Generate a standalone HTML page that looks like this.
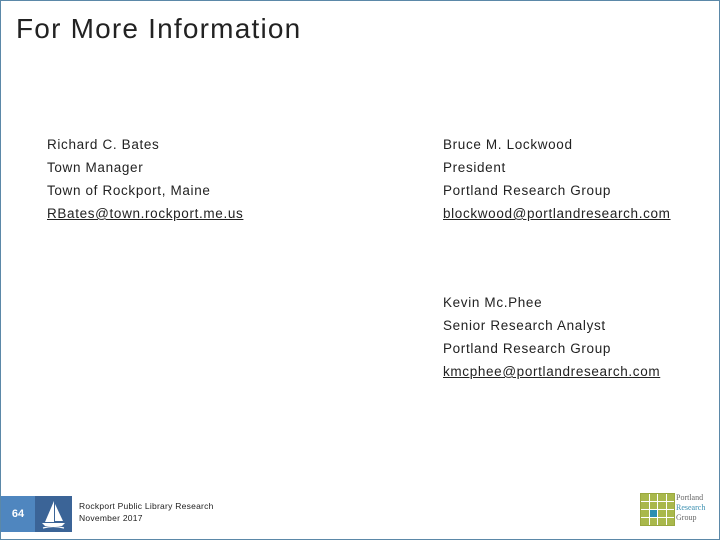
<!DOCTYPE html>
<html><head><style>
body{margin:0;width:720px;height:540px;overflow:hidden;background:#fff;font-family:"Liberation Sans",sans-serif;}
.frame{position:absolute;left:0;top:0;width:718px;height:538px;border:1px solid #5b88a8;}
.t{position:absolute;left:16px;top:13px;font-size:28px;color:#222;letter-spacing:1.2px;}
.b{position:absolute;font-size:13.5px;line-height:23px;color:#222;letter-spacing:0.65px;}
.b u{color:#222;}
.pn{position:absolute;left:1px;top:496px;width:34px;height:36px;background:#4f86bf;color:#fff;font-size:11px;font-weight:bold;text-align:center;line-height:36px;}
.lg{position:absolute;left:35px;top:496px;width:37px;height:36px;background:#3b6497;}
.ft{position:absolute;left:79px;top:500px;font-size:8.5px;line-height:12px;color:#222;letter-spacing:0.25px;}
.grid{position:absolute;left:640px;top:493px;width:33px;height:31px;background:#fff;border:1px solid #9aa83e;display:grid;grid-template-columns:repeat(4,1fr);grid-template-rows:repeat(4,1fr);gap:1px;}
.grid div{background:#a9b84c;}
.prg{position:absolute;left:676px;top:493px;font-family:"Liberation Serif",serif;font-size:8px;line-height:10px;color:#666;}
</style></head><body>
<div class="frame"></div>
<div class="t">For More Information</div>
<div class="b" style="left:47px;top:133px;">Richard C. Bates<br>Town Manager<br>Town of Rockport, Maine<br><u>RBates@town.rockport.me.us</u></div>
<div class="b" style="left:443px;top:133px;">Bruce M. Lockwood<br>President<br>Portland Research Group<br><u>blockwood@portlandresearch.com</u></div>
<div class="b" style="left:443px;top:291px;">Kevin Mc.Phee<br>Senior Research Analyst<br>Portland Research Group<br><u>kmcphee@portlandresearch.com</u></div>
<div class="pn">64</div>
<div class="lg"><svg width="37" height="36" viewBox="0 0 37 36"><path d="M19 5 L19 26 L10 26 Z" fill="#fff"/><path d="M20 8 L28 25 L20 25 Z" fill="#fff"/><path d="M7 27 L30 27 L27 30 L10 30 Z" fill="#fff"/><path d="M8 32 Q18 29 29 32" stroke="#fff" fill="none" stroke-width="1.2"/></svg></div>
<div class="ft">Rockport Public Library Research<br>November 2017</div>
<div class="grid"><div></div><div></div><div></div><div></div><div></div><div></div><div></div><div></div><div></div><div style="background:#2a8fb0"></div><div></div><div></div><div></div><div></div><div></div><div></div></div>
<div class="prg">Portland<br><span style="color:#3a8fb0">Research</span><br>Group</div>
</body></html>
